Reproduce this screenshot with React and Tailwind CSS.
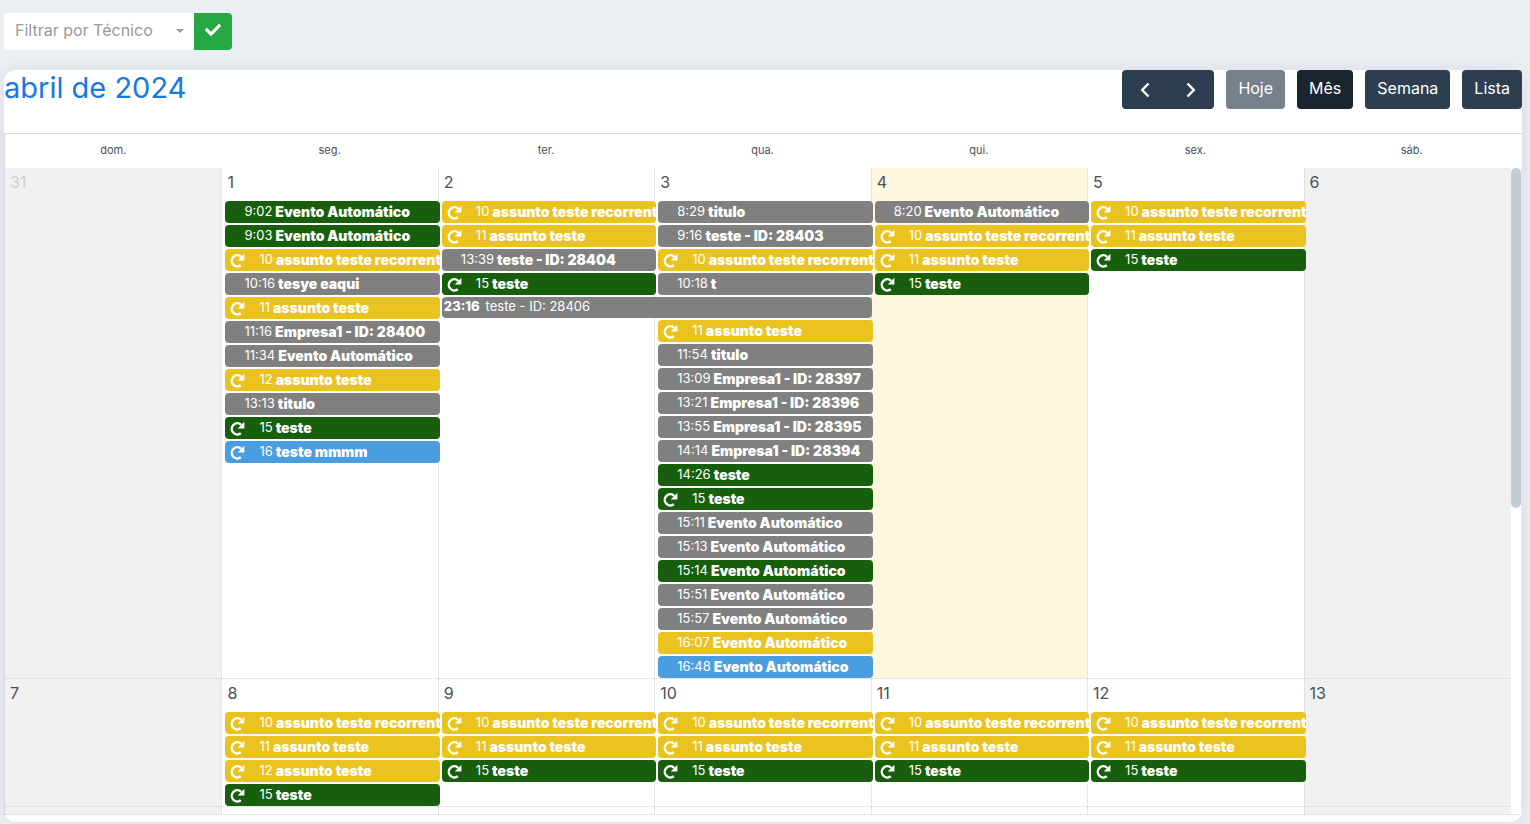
import { FaCheck } from "react-icons/fa";

const COLORS = {
  green: "bg-[#175f0d]",
  yellow: "bg-[#eac321]",
  gray: "bg-[#808080]",
  blue: "bg-[#4a9dde]",
};

const ev = (color, time, title) => ({ color, time, title });
const rec = (color, time, title) => ({ color, time, title, recurring: true });

const recorrente = rec("yellow", "10", "assunto teste recorrent");
const assunto = rec("yellow", "11", "assunto teste");
const teste = rec("green", "15", "teste");

const weekDays = ["dom.", "seg.", "ter.", "qua.", "qui.", "sex.", "sáb."];

const weeks = [
  [
    { day: 31, other: true, events: [] },
    {
      day: 1,
      events: [
        ev("green", "9:02", "Evento Automático"),
        ev("green", "9:03", "Evento Automático"),
        recorrente,
        ev("gray", "10:16", "tesye eaqui"),
        assunto,
        ev("gray", "11:16", "Empresa1 - ID: 28400"),
        ev("gray", "11:34", "Evento Automático"),
        rec("yellow", "12", "assunto teste"),
        ev("gray", "13:13", "titulo"),
        teste,
        rec("blue", "16", "teste mmmm"),
      ],
    },
    {
      day: 2,
      events: [
        recorrente,
        assunto,
        ev("gray", "13:39", "teste - ID: 28404"),
        teste,
        { color: "gray", time: "23:16", title: "teste - ID: 28406", span: true },
      ],
    },
    {
      day: 3,
      events: [
        ev("gray", "8:29", "titulo"),
        ev("gray", "9:16", "teste - ID: 28403"),
        recorrente,
        ev("gray", "10:18", "t"),
        { spacer: true },
        assunto,
        ev("gray", "11:54", "titulo"),
        ev("gray", "13:09", "Empresa1 - ID: 28397"),
        ev("gray", "13:21", "Empresa1 - ID: 28396"),
        ev("gray", "13:55", "Empresa1 - ID: 28395"),
        ev("gray", "14:14", "Empresa1 - ID: 28394"),
        ev("green", "14:26", "teste"),
        teste,
        ev("gray", "15:11", "Evento Automático"),
        ev("gray", "15:13", "Evento Automático"),
        ev("green", "15:14", "Evento Automático"),
        ev("gray", "15:51", "Evento Automático"),
        ev("gray", "15:57", "Evento Automático"),
        ev("yellow", "16:07", "Evento Automático"),
        ev("blue", "16:48", "Evento Automático"),
      ],
    },
    {
      day: 4,
      today: true,
      events: [ev("gray", "8:20", "Evento Automático"), recorrente, assunto, teste],
    },
    { day: 5, events: [recorrente, assunto, teste] },
    { day: 6, events: [] },
  ],
  [
    { day: 7, events: [] },
    { day: 8, events: [recorrente, assunto, rec("yellow", "12", "assunto teste"), teste] },
    { day: 9, events: [recorrente, assunto, teste] },
    { day: 10, events: [recorrente, assunto, teste] },
    { day: 11, events: [recorrente, assunto, teste] },
    { day: 12, events: [recorrente, assunto, teste] },
    { day: 13, events: [] },
  ],
];

function RepeatIcon() {
  return (
    <svg viewBox="0 0 15 15" className="size-[15px]" aria-hidden="true">
      <path
        d="M11.2 3.8A5.6 5.6 0 1 0 10.8 12.3"
        fill="none"
        stroke="currentColor"
        strokeWidth="2.4"
      />
      <path d="M14.4 0.8V7.4H7.8z" fill="currentColor" />
    </svg>
  );
}

function EventBar({ event }) {
  if (event.spacer) return <li className="h-[21px]" aria-hidden="true" />;
  if (event.span) {
    return (
      <li className="relative z-10 w-[calc(200%+5px)]">
        <a
          href="#"
          className="flex h-[21px] items-center gap-1.5 overflow-hidden rounded-[4px] bg-[#808080] px-0.5 pb-0.5 whitespace-nowrap text-white"
        >
          <span className="font-extrabold">{event.time}</span>
          <span>{event.title}</span>
        </a>
      </li>
    );
  }
  return (
    <li className="relative -mr-0.5">
      <a
        href="#"
        className={`flex h-[22px] items-center rounded-[4px] pb-px whitespace-nowrap text-white ${COLORS[event.color]}`}
      >
        {event.recurring ? (
          <span className="flex w-[34px] shrink-0 pt-0.5 pl-[5px]">
            <RepeatIcon />
          </span>
        ) : (
          <span className="w-[19px] shrink-0" />
        )}
        <span className="shrink-0">{event.time}</span>
        <span className="ml-[3px] shrink-0 text-sm font-black">{event.title}</span>
      </a>
    </li>
  );
}

function dayBackground(cell, index) {
  if (cell.today) return "bg-[#fff8df]";
  if (index === 0 || index === 6) return "bg-[#f1f1f1]";
  return "";
}

function ToolbarButton({ children, className = "bg-[#2c3e50]" }) {
  return (
    <button
      type="button"
      className={`flex h-[39px] items-center rounded-[4px] px-3 pb-1 text-base text-white ${className}`}
    >
      {children}
    </button>
  );
}

function Chevron({ label, d }) {
  return (
    <button type="button" aria-label={label} className="flex w-[46px] items-center justify-center">
      <svg viewBox="0 0 16 16" className="size-4" fill="none" stroke="currentColor" strokeWidth="2.4">
        <path d={d} />
      </svg>
    </button>
  );
}

export default function App() {
  return (
    <div className="min-h-screen bg-[#ebeef3] pt-[13px] pr-2 pb-0.5 pl-1 font-['Inter','Liberation_Sans',sans-serif] text-[#495057]">
      <form className="flex" onSubmit={(e) => e.preventDefault()}>
        <div className="relative">
          <select
            aria-label="Filtrar por Técnico"
            className="h-[37px] w-[190px] appearance-none rounded-l-[4px] bg-white pr-6 pb-[3px] pl-[11px] text-base text-[#999]"
          >
            <option>Filtrar por Técnico</option>
          </select>
          <svg viewBox="0 0 8 4" className="pointer-events-none absolute top-4 right-2.5 h-1 w-2 fill-[#999]">
            <path d="M0 0h8L4 4z" />
          </svg>
        </div>
        <button
          type="submit"
          aria-label="Filtrar"
          className="flex h-[37px] w-[38px] items-center justify-center rounded-r-[4px] bg-[#28a745] pb-1 text-white"
        >
          <FaCheck size={16} />
        </button>
      </form>

      <main className="mt-5 rounded-[12px] bg-white pb-[7px] shadow-[0_0_20px_rgba(8,21,66,0.08)]">
        <header className="flex h-[63px] items-start justify-between">
          <h2 className="text-[29px] leading-9 text-[#1579e0]">abril de 2024</h2>
          <div className="flex gap-3">
            <div className="flex h-[39px] rounded-[4px] bg-[#2c3e50] text-white">
              <Chevron label="Anterior" d="M11.5 1.5 5.2 8l6.3 6.5" />
              <Chevron label="Próximo" d="M4.5 1.5 10.8 8l-6.3 6.5" />
            </div>
            <ToolbarButton className="bg-[#77818c]">Hoje</ToolbarButton>
            <ToolbarButton className="bg-[#1a252f]">Mês</ToolbarButton>
            <ToolbarButton>Semana</ToolbarButton>
            <ToolbarButton>Lista</ToolbarButton>
          </div>
        </header>

        <div className="relative border-t border-l border-[#d8dadd]">
          <table className="w-[calc(100%-2px)] table-fixed border-separate border-spacing-0 text-[13px]">
            <thead>
              <tr>
                {weekDays.map((name) => (
                  <th key={name} scope="col" className="h-[34px] p-0 pb-0.5 text-[11px] font-normal">
                    {name}
                  </th>
                ))}
              </tr>
            </thead>
            <tbody>
              {weeks.map((week) => (
                <tr key={week[0].day}>
                  {week.map((cell, i) => (
                    <td
                      key={cell.day}
                      className={`border-b border-dotted border-[#d3d3d3] p-0 align-top not-first:border-l ${dayBackground(cell, i)}`}
                    >
                      <div className={`h-[33px] px-[5px] pt-0.5 text-base ${cell.other ? "text-[#d0d0d0]" : ""}`}>
                        {cell.day}
                      </div>
                      <ul className="ml-[3px] flex flex-col gap-0.5">
                        {cell.events.map((event, n) => (
                          <EventBar key={n} event={event} />
                        ))}
                      </ul>
                    </td>
                  ))}
                </tr>
              ))}
              <tr aria-hidden="true">
                {weekDays.map((name, i) => (
                  <td
                    key={name}
                    className={`h-2 border-b border-dotted border-[#d3d3d3] p-0 not-first:border-l ${dayBackground({}, i)}`}
                  />
                ))}
              </tr>
            </tbody>
          </table>
          <div className="absolute top-[34px] right-0 bottom-0 w-[11px] border-r border-b border-dotted border-[#d3d3d3] bg-white">
            <div className="h-[340px] w-2.5 rounded-full bg-[#c3ccd7]" />
          </div>
        </div>
      </main>
    </div>
  );
}
